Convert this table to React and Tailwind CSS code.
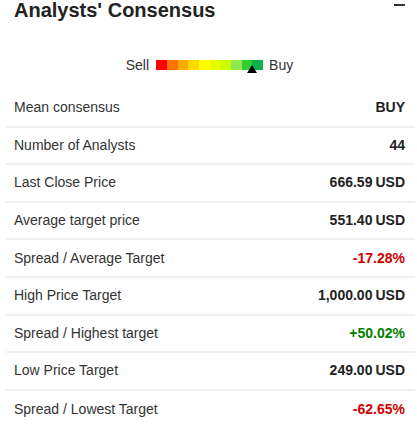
const rows = [
  { label: 'Mean consensus', value: 'BUY' },
  { label: 'Number of Analysts', value: '44' },
  { label: 'Last Close Price', value: '666.59', unit: 'USD' },
  { label: 'Average target price', value: '551.40', unit: 'USD' },
  { label: 'Spread / Average Target', value: '-17.28%', tone: 'neg' },
  { label: 'High Price Target', value: '1,000.00', unit: 'USD' },
  { label: 'Spread / Highest target', value: '+50.02%', tone: 'pos' },
  { label: 'Low Price Target', value: '249.00', unit: 'USD' },
  { label: 'Spread / Lowest Target', value: '-62.65%', tone: 'neg' },
];

// scale colours, sell -> buy
const scale = [
  'bg-[#ff0000]',
  'bg-[#ff7400]',
  'bg-[#ffaa00]',
  'bg-[#ffd800]',
  'bg-[#ffff00]',
  'bg-[#e6ff00]',
  'bg-[#ccff00]',
  'bg-[#8ee84f]',
  'bg-[#33cc33]',
  'bg-[#12b04a]',
];

function App() {
  return (
    <div className="w-[417px] h-[443px] bg-white font-['Liberation_Sans',Arial,sans-serif] text-[#333] overflow-hidden">
      {/* Header */}
      <div className="flex items-start justify-between pl-[14px] pr-[12px]">
        <h2 className="text-[20px] leading-[20px] font-bold text-[#222]">Analysts' Consensus</h2>
        <div className="w-[11px] h-[2px] bg-[#333] mt-[4px]" />
      </div>

      {/* Rating scale */}
      <div className="flex items-center justify-center h-[70px] pt-[21px] pb-[1px] pl-[2px]">
        <span className="text-[14px] leading-[14px] mr-[7px]">Sell</span>
        <div className="relative flex h-[10px] w-[107px]">
          {scale.map((c, i) => (
            <div key={i} className={`flex-1 ${c}`} />
          ))}
          <div className="absolute left-[91px] top-[5px] w-0 h-0 border-l-[5px] border-r-[5px] border-b-[8px] border-l-transparent border-r-transparent border-b-black" />
        </div>
        <span className="text-[14px] leading-[14px] ml-[6px]">Buy</span>
      </div>

      {/* Table */}
      <div className="ml-[6px] mr-[2px]">
        {rows.map((r, i) => (
          <div
            key={r.label}
            className={`flex items-center justify-between h-[37.6px] pl-[8px] pr-[10px] text-[14px] ${i < rows.length - 1 ? 'border-b-2 border-[#f0f0f0]' : ''}`}
          >
            <span>{r.label}</span>
            <span
              className={`font-bold ${r.tone === 'neg' ? 'text-[#d00000]' : r.tone === 'pos' ? 'text-[#008000]' : 'text-[#222]'}`}
            >
              {r.value}
              {r.unit && <span className="ml-[3px]">{r.unit}</span>}
            </span>
          </div>
        ))}
      </div>
    </div>
  );
}

export default App;
